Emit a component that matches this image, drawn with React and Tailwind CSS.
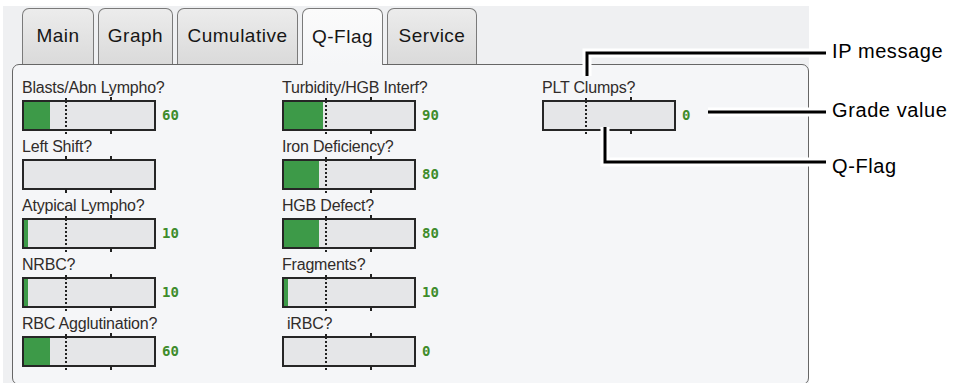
import React from "react";

const tabs = [
  { label: "Main", w: "w-[72px]" },
  { label: "Graph", w: "w-[75px]" },
  { label: "Cumulative", w: "w-[121px]" },
  { label: "Q-Flag", w: "w-[81px]", active: true },
  { label: "Service", w: "w-[90px]" },
];

const columns = [
  [
    { label: "Blasts/Abn Lympho?", value: 60 },
    { label: "Left Shift?", value: null },
    { label: "Atypical Lympho?", value: 10 },
    { label: "NRBC?", value: 10 },
    { label: "RBC Agglutination?", value: 60 },
  ],
  [
    { label: "Turbidity/HGB Interf?", value: 90 },
    { label: "Iron Deficiency?", value: 80 },
    { label: "HGB Defect?", value: 80 },
    { label: "Fragments?", value: 10 },
    { label: "iRBC?", value: 0, indent: true },
  ],
  [{ label: "PLT Clumps?", value: 0 }],
];

function Tab({ label, w, active }) {
  return (
    <div
      className={
        "flex items-center justify-center rounded-t-[7px] border border-b-0 border-[#7a7a7a] text-[19px] tracking-[0.5px] text-[#161616] " +
        w +
        (active
          ? " relative z-10 -mb-px h-[57px] bg-gradient-to-b from-[#fbfbfb] to-[#f5f6f8]"
          : " h-[56px] bg-gradient-to-b from-[#ececec] to-[#dadada]")
      }
    >
      {label}
    </div>
  );
}

function FlagBar({ value }) {
  const empty = value === null;
  return (
    <div className="flex items-center">
      <div className="relative h-[31px] w-[134px] border-2 border-[#262626] bg-[#e5e6e8]">
        {value > 0 && (
          <div className="h-full bg-[#3d9a48]" style={{ width: Math.round(value * 0.433) }} />
        )}
        {!empty && (
          <div className="absolute left-[41px] -top-[4px] h-[36px] border-l-2 border-dotted border-[#222]" />
        )}
        {empty && (
          <>
            <div className="absolute left-[41px] -top-[5px] h-[4px] w-[2px] bg-[#222]" />
            <div className="absolute left-[41px] -bottom-[5px] h-[4px] w-[2px] bg-[#222]" />
          </>
        )}
        <div className="absolute left-[86px] -top-[5px] h-[4px] w-[2px] bg-[#222]" />
        <div className="absolute left-[86px] -bottom-[5px] h-[4px] w-[2px] bg-[#222]" />
      </div>
      {!empty && (
        <span className="ml-[6px] font-['DejaVu_Sans_Mono',monospace] text-[14px] font-bold text-[#3f8c2c]">
          {value}
        </span>
      )}
    </div>
  );
}

function FlagRow({ label, value, indent }) {
  return (
    <div className="mb-[6px]">
      <div
        className={
          "mb-[2px] h-[20px] whitespace-nowrap text-[16px] leading-[20px] tracking-[-0.2px] text-[#302c2a]" +
          (indent ? " pl-[5px]" : "")
        }
      >
        {label}
      </div>
      <FlagBar value={value} />
    </div>
  );
}

export default function App() {
  return (
    <div className="relative h-[383px] w-[953px] overflow-hidden bg-white font-['Liberation_Sans',Arial,sans-serif]">
      <div className="ml-[3px] mt-[6px] flex h-[379px] w-[806px] flex-col bg-[#eff0f2] pl-[9px]">
        <div className="flex h-[58px] items-end gap-[4px] pl-[10px]">
          {tabs.map((t) => (
            <Tab key={t.label} {...t} />
          ))}
        </div>
        <div className="flex flex-1 rounded-[7px] border border-[#666] bg-[#f5f6f8] pl-[9px] pt-[13px]">
          {columns.map((col, i) => (
            <div key={i} className="w-[260px]">
              {col.map((r) => (
                <FlagRow key={r.label} {...r} />
              ))}
            </div>
          ))}
        </div>
      </div>

      <svg className="absolute left-0 top-0" width="953" height="383">
        <g fill="none" stroke="#fff" strokeWidth="9" strokeLinejoin="miter">
          <polyline points="587,76 587,53 826,53" />
          <polyline points="708,112 826,112" />
          <polyline points="605,127 605,162 826,162" />
        </g>
        <g fill="none" stroke="#000" strokeWidth="3" strokeLinejoin="miter">
          <polyline points="587,76 587,53 826,53" />
          <polyline points="708,112 826,112" />
          <polyline points="605,127 605,162 826,162" />
        </g>
      </svg>

      <div className="absolute left-[832px] top-[41px] text-[20px] leading-[20px] tracking-[0.6px] text-black">IP message</div>
      <div className="absolute left-[832px] top-[100px] text-[20px] leading-[20px] tracking-[0.6px] text-black">Grade value</div>
      <div className="absolute left-[832px] top-[156px] text-[20px] leading-[20px] tracking-[0.6px] text-black">Q-Flag</div>
    </div>
  );
}
